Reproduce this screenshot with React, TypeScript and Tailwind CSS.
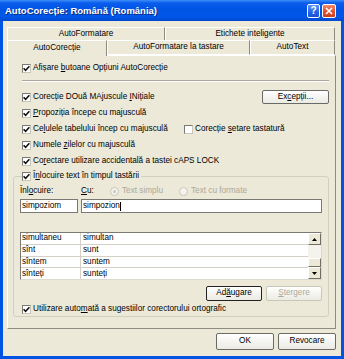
import type { ReactNode } from 'react'

function Check({ checked = true }: { checked?: boolean }) {
  return (
    <span className="w-[9px] h-[9px] shrink-0 border border-t-[#7a7a73] border-l-[#7a7a73] border-r-[#c8c6b8] border-b-[#c8c6b8] bg-white flex items-center justify-center">
      {checked && (
        <svg width="7" height="7" viewBox="0 0 7 7">
          <path d="M0.6 3.2 L2.6 5.3 L6.4 1.2" stroke="#111" strokeWidth="1.5" fill="none" />
        </svg>
      )}
    </span>
  )
}

function Radio({ selected = false }: { selected?: boolean }) {
  return (
    <span className="w-[9px] h-[9px] shrink-0 rounded-full border border-[#c9c7ba] bg-[#f4f3ee] flex items-center justify-center">
      {selected && <span className="w-[3px] h-[3px] rounded-full bg-[#c9c7ba]" />}
    </span>
  )
}

function Row({ children, className = '' }: { children: ReactNode; className?: string }) {
  return <div className={`h-[16px] flex items-center gap-[2px] pl-[9px] ${className}`}>{children}</div>
}

function Btn({ children, className = '', disabled = false }: { children: ReactNode; className?: string; disabled?: boolean }) {
  return (
    <div
      className={`flex items-center justify-center rounded-[2px] border bg-gradient-to-b from-white to-[#ebeae3] ${
        disabled ? 'border-[#c9c7ba] text-[#aca899]' : 'border-[#6b6b66]'
      } ${className}`}
    >
      {children}
    </div>
  )
}

function TitleBar() {
  return (
    <div className="h-[21px] shrink-0 flex items-center pl-[5px] pr-[8px] bg-[linear-gradient(to_bottom,#3d8ff8_0%,#0b5ded_14%,#0054e3_45%,#0057ea_80%,#0047cc_100%)]">
      <span className="flex-1 text-white font-bold text-[9.5px] [text-shadow:1px_1px_0_#0a2a80]">
        AutoCorecție: Română (România)
      </span>
      <div className="flex gap-[2px]">
        <div className="w-[13px] h-[14px] rounded-[2px] border border-white bg-[linear-gradient(to_bottom,#5a93f8,#2662e8_60%,#1b52d8)] flex items-center justify-center text-white font-bold text-[10px] leading-none">
          ?
        </div>
        <div className="w-[14px] h-[14px] rounded-[2px] border border-white bg-[linear-gradient(to_bottom,#ef8a6c,#e0502d_55%,#c9401f)] flex items-center justify-center">
          <svg width="8" height="8" viewBox="0 0 8 8">
            <path d="M1 1 L7 7 M7 1 L1 7" stroke="#fff" strokeWidth="1.6" />
          </svg>
        </div>
      </div>
    </div>
  )
}

function Tab({ children, className = '' }: { children: ReactNode; className?: string }) {
  return (
    <div className={`flex items-center justify-center border-t border-l border-r border-t-white border-l-white border-r-[#8e8c80] ${className}`}>
      {children}
    </div>
  )
}

const list = [
  ['simultaneu', 'simultan'],
  ['sînt', 'sunt'],
  ['sîntem', 'suntem'],
  ['sînteți', 'sunteți'],
]

export default function App() {
  return (
    <div className="w-[344px] h-[359px] flex flex-col bg-[#0054e3] font-['Liberation_Sans',Arial,sans-serif] text-[8.2px] text-black leading-none select-none">
      <TitleBar />
      <div className="flex-1 mx-[3px] mb-[3px] bg-[#ece9d8] flex flex-col">
        {/* tabs */}
        <div className="pt-[6px] pl-[4px]">
          <div className="h-[13px] flex">
            <Tab className="w-[158px]">AutoFormatare</Tab>
            <Tab className="w-[170px]">Etichete inteligente</Tab>
          </div>
          <div className="h-[15px] flex">
            <Tab className="w-[100px] relative z-10 mb-[-1px] h-[16px] bg-[#ece9d8]">AutoCorecție</Tab>
            <Tab className="w-[143px] border-b border-b-white">AutoFormatare la tastare</Tab>
            <Tab className="w-[85px] border-b border-b-white">AutoText</Tab>
          </div>
        </div>

        {/* panel */}
        <div className="ml-[4px] w-[329px] h-[274px] border border-t-white border-l-white border-r-[#8e8c80] border-b-[#8e8c80] px-[5px] pt-[4px] flex flex-col">
          <Row>
            <Check />
            <span>
              Afișare <u>b</u>utoane Opțiuni AutoCorecție
            </span>
          </Row>
          <div className="mt-[4px] ml-[9px] mr-[1px] h-[2px] border-t border-t-[#aca899] border-b border-b-white" />
          <Row className="mt-[7px] justify-between pr-[1px]">
            <span className="flex items-center gap-[2px]">
              <Check />
              <span>
                Corecție DOuă MAjuscule <u>I</u>Nițiale
              </span>
            </span>
            <Btn className="w-[67px] h-[14px]">
              Ex<u>c</u>epții...
            </Btn>
          </Row>
          <Row>
            <Check />
            <span>
              <u>P</u>ropoziția începe cu majusculă
            </span>
          </Row>
          <Row>
            <span className="w-[160px] flex items-center gap-[2px]">
              <Check />
              <span>
                Ce<u>l</u>ulele tabelului încep cu majusculă
              </span>
            </span>
            <Check checked={false} />
            <span>
              Corecție <u>s</u>etare tastatură
            </span>
          </Row>
          <Row>
            <Check />
            <span>
              Numele <u>z</u>ilelor cu majusculă
            </span>
          </Row>
          <Row>
            <Check />
            <span>
              Co<u>r</u>ectare utilizare accidentală a tastei cAPS LOCK
            </span>
          </Row>

          <fieldset className="mr-[1px] border border-[#d0d0bf] rounded-[3px] pl-[6px] pr-[6px] h-[148px]">
            <legend className="ml-[2px] pr-[2px] h-[14px] flex items-center gap-[2px]">
              <Check />
              <span>
                Î<u>n</u>locuire text în timpul tastării
              </span>
            </legend>
            <div className="mt-[2px] h-[12px] flex items-center">
              <span className="w-[61px]">
                Înl<u>o</u>cuire:
              </span>
              <span className="w-[29px]">
                <u>C</u>u:
              </span>
              <span className="w-[69px] flex items-center gap-[3px] text-[#aca899]">
                <Radio selected />
                Text simplu
              </span>
              <span className="flex items-center gap-[3px] text-[#aca899]">
                <Radio />
                Text cu formate
              </span>
            </div>
            <div className="mt-[2px] h-[14px] flex gap-[3px]">
              <div className="w-[58px] border border-[#7a7a73] bg-white flex items-center pl-[1px]">simpoziom</div>
              <div className="flex-1 border border-[#7a7a73] bg-white flex items-center pl-[1px]">
                simpozion
                <span className="w-px h-[9px] bg-black" />
              </div>
            </div>
            <div className="mt-[19px] h-[48px] border border-t-[#7a7a73] border-l-[#7a7a73] border-r-[#dcdad0] border-b-[#dcdad0] bg-white flex">
              <div className="flex-1 flex flex-col">
                {list.map(([a, b], i) => (
                  <div key={a} className={`flex-1 flex items-center ${i < 3 ? 'border-b border-b-[#d4d0c8]' : ''}`}>
                    <span className="w-[60px] h-full flex items-center pl-[1px] border-r border-r-[#d4d0c8]">{a}</span>
                    <span className="pl-[2px]">{b}</span>
                  </div>
                ))}
              </div>
              <div className="w-[13px] flex flex-col bg-[#f4f3ee]">
                <div className="h-[12px] border border-t-white border-l-white border-r-[#716f64] border-b-[#716f64] bg-[#ece9d8] flex items-center justify-center">
                  <svg width="5" height="3" viewBox="0 0 5 3">
                    <path d="M2.5 0 L5 3 L0 3 Z" fill="#000" />
                  </svg>
                </div>
                <div className="flex-1 flex flex-col justify-end">
                  <div className="h-[9px] border border-t-white border-l-white border-r-[#716f64] border-b-[#716f64] bg-[#ece9d8]" />
                </div>
                <div className="h-[12px] border border-t-white border-l-white border-r-[#716f64] border-b-[#716f64] bg-[#ece9d8] flex items-center justify-center">
                  <svg width="5" height="3" viewBox="0 0 5 3">
                    <path d="M0 0 L5 0 L2.5 3 Z" fill="#000" />
                  </svg>
                </div>
              </div>
            </div>
            <div className="mt-[6px] h-[15px] flex justify-end gap-[4px]">
              <Btn className="w-[56px] border-[#222]">
                Ad<u>ă</u>ugare
              </Btn>
              <Btn className="w-[56px]" disabled>
                <u>Ș</u>tergere
              </Btn>
            </div>
            <div className="mt-[1px] h-[14px] flex items-center gap-[2px] pl-[2px]">
              <Check />
              <span>
                Utilizare auto<u>m</u>ată a sugestiilor corectorului ortografic
              </span>
            </div>
          </fieldset>
        </div>

        {/* footer */}
        <div className="flex-1 flex justify-end items-start gap-[4px] pt-[4px] pr-[5px]">
          <Btn className="w-[58px] h-[17px]">OK</Btn>
          <Btn className="w-[58px] h-[17px]">Revocare</Btn>
        </div>
      </div>
    </div>
  )
}
